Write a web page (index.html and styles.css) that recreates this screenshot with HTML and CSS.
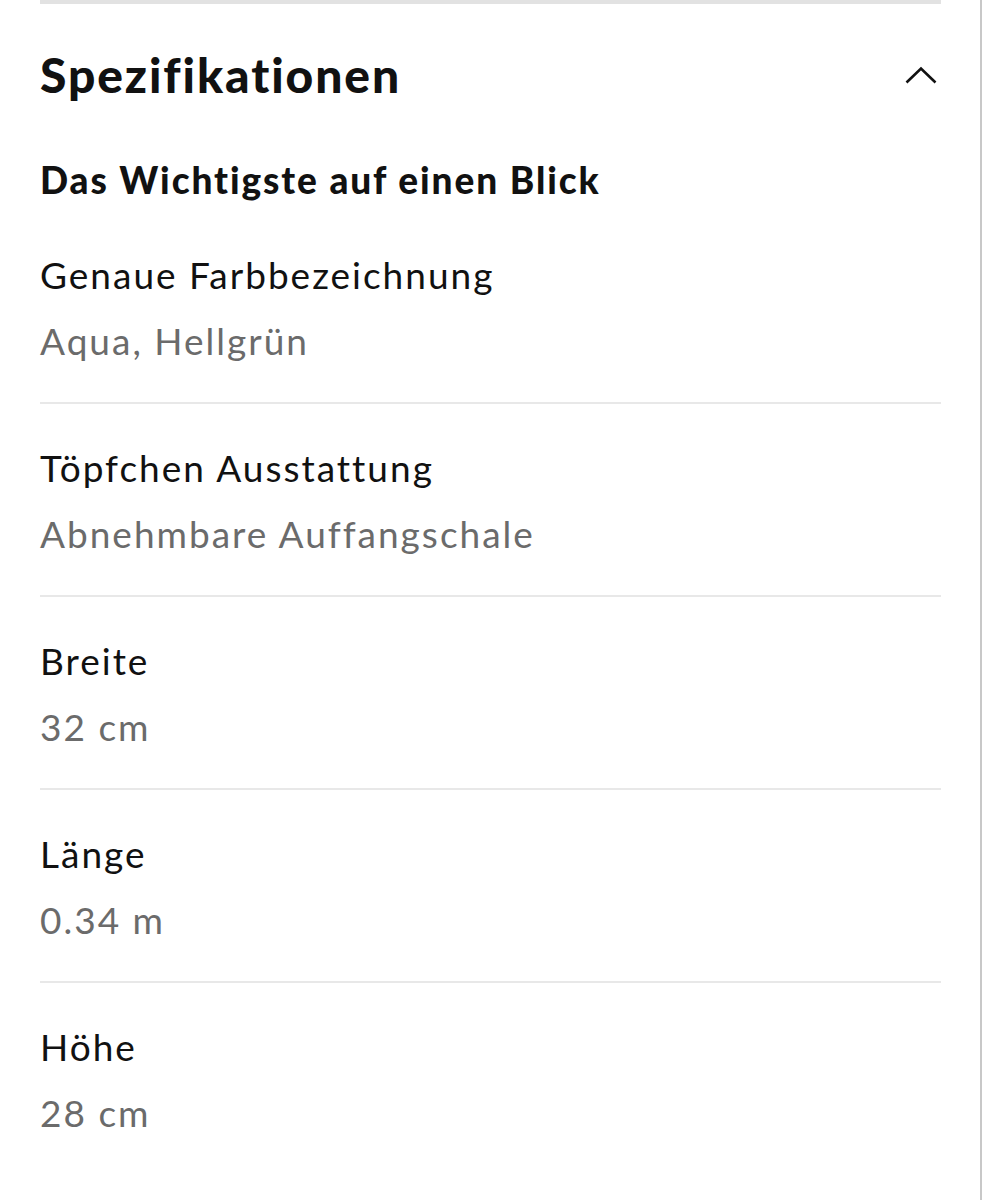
FILE: index.html
```html
<!DOCTYPE html>
<html lang="de">
  <head>
    <meta charset="UTF-8" />
    <meta name="viewport" content="width=device-width, initial-scale=1.0" />
    <title>Spezifikationen</title>
    <link rel="stylesheet" href="styles.css">
  </head>
  <body>
    <div class="panel">
      <section class="specs">
        <div class="specs-head">
          <h2>Spezifikationen</h2>
          <button class="toggle" type="button" aria-label="Einklappen">
            <svg width="32" height="18" viewBox="0 0 32 18">
              <path d="M1.5 16.5 L16 2.5 L30.5 16.5" fill="none" stroke="#111" stroke-width="2.6" />
            </svg>
          </button>
        </div>

        <h3>Das Wichtigste auf einen Blick</h3>

        <div class="spec-list">
          <div class="spec">
            <div class="spec-label">Genaue Farbbezeichnung</div>
            <div class="spec-value">Aqua, Hellgrün</div>
          </div>
          <div class="spec">
            <div class="spec-label">Töpfchen Ausstattung</div>
            <div class="spec-value">Abnehmbare Auffangschale</div>
          </div>
          <div class="spec">
            <div class="spec-label">Breite</div>
            <div class="spec-value">32 cm</div>
          </div>
          <div class="spec">
            <div class="spec-label">Länge</div>
            <div class="spec-value">0.34 m</div>
          </div>
          <div class="spec last">
            <div class="spec-label">Höhe</div>
            <div class="spec-value">28 cm</div>
          </div>
        </div>
      </section>
    </div>
  </body>
</html>
```

FILE: styles.css
```css
* {
  margin: 0;
  padding: 0;
  box-sizing: border-box;
}
body {
  font-family: Lato, "Noto Sans", sans-serif;
  background-color: #fff;
  color: #111;
}
.panel {
  width: 982px;
  height: 1200px;
  border-right: 2px solid #c8c8c8;
  padding: 0 39px 0 40px;
}
.specs {
  border-top: 4px solid #e2e2e2;
}
.specs-head {
  display: flex;
  justify-content: space-between;
  align-items: center;
  padding-top: 43px;
}
.specs-head h2 {
  font-size: 48px;
  font-weight: 900;
  line-height: 56px;
  letter-spacing: 1.9px;
}
.toggle {
  background: none;
  border: none;
  margin-right: 4px;
  display: flex;
}
h3 {
  font-size: 37px;
  font-weight: 900;
  line-height: 44px;
  letter-spacing: 1.9px;
  margin-top: 55px;
  margin-bottom: 9px;
}
.spec {
  padding: 42px 0 39px;
  border-bottom: 2px solid #e8e8e8;
}
.spec.last {
  border-bottom: none;
}
.spec-label,
.spec-value {
  font-size: 37px;
  line-height: 44px;
  letter-spacing: 2px;
}
.spec-label {
  color: #111;
}
.spec-value {
  margin-top: 22px;
  color: #6b6b6b;
}
```
